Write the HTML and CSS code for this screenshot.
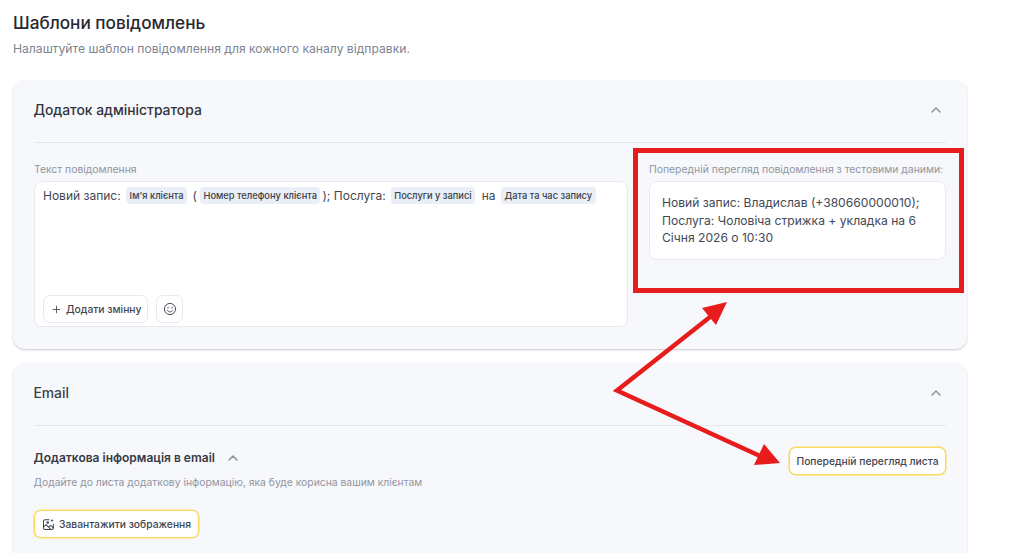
FILE: index.html
```html
<!DOCTYPE html>
<html lang="uk">
<head>
<meta charset="utf-8">
<title>Шаблони повідомлень</title>
<link rel="stylesheet" href="styles.css">
</head>
<body>
<main class="page">
  <h1 class="title">Шаблони повідомлень</h1>
  <p class="subtitle">Налаштуйте шаблон повідомлення для кожного каналу відправки.</p>

  <section class="card first">
    <header class="card-head">
      <h2 class="card-title">Додаток адміністратора</h2>
      <svg class="chev" viewBox="0 0 12 12"><path d="M2 8l4-4 4 4"/></svg>
    </header>
    <div class="cols">
      <div class="col-left">
        <div class="label">Текст повідомлення</div>
        <div class="editor">
          <div class="editor-text">
            <span>Новий запис:</span><span class="tag">Ім'я клієнта</span><span class="paren">(</span><span class="tag tag-tight">Номер телефону клієнта</span><span class="after">); Послуга:</span><span class="tag">Послуги у записі</span><span class="na">на</span><span class="tag">Дата та час запису</span>
          </div>
          <div class="editor-actions">
            <button class="btn btn-add"><svg class="plus" viewBox="0 0 12 12"><path d="M6 1.5v9M1.5 6h9"/></svg>Додати змінну</button>
            <button class="btn btn-icon"><svg class="smile" viewBox="0 0 14 14"><circle cx="7" cy="7" r="5.6"/><path d="M4.4 8.3c.7 1.1 1.5 1.6 2.6 1.6s1.9-.5 2.6-1.6"/><path d="M5 5.2v.9M9 5.2v.9"/></svg></button>
          </div>
        </div>
      </div>
      <div class="col-right">
        <div class="label">Попередній перегляд повідомлення з тестовими даними:</div>
        <div class="preview">Новий запис: Владислав (+380660000010); Послуга: Чоловіча стрижка + укладка на 6 Січня 2026 о 10:30</div>
      </div>
    </div>
  </section>

  <section class="card second">
    <header class="card-head">
      <h2 class="card-title email">Email</h2>
      <svg class="chev" viewBox="0 0 12 12"><path d="M2 8l4-4 4 4"/></svg>
    </header>
    <div class="extra">
      <div class="extra-main">
        <div class="extra-title">Додаткова інформація в email<svg class="chev chev-inline" viewBox="0 0 12 12"><path d="M2 8l4-4 4 4"/></svg></div>
        <p class="extra-desc">Додайте до листа додаткову інформацію, яка буде корисна вашим клієнтам</p>
        <button class="btn btn-yellow"><svg class="img-ico" viewBox="0 0 14 14"><path d="M7.6 1.8H3.2A1.6 1.6 0 0 0 1.6 3.4v7.4a1.6 1.6 0 0 0 1.6 1.6h7.4a1.6 1.6 0 0 0 1.6-1.6V6.6"/><path d="M1.8 9.6l2.6-2.4 5 5"/><path d="M7.6 9.4l1.6-1.4 3 2.6"/><circle cx="6.1" cy="4.9" r=".9"/><path class="spark" d="M10.8.8l.5 1.4 1.4.5-1.4.5-.5 1.4-.5-1.4-1.4-.5 1.4-.5z"/></svg>Завантажити зображення</button>
      </div>
      <button class="btn btn-yellow btn-preview">Попередній перегляд листа</button>
    </div>
  </section>
</main>

<div class="redbox"></div>
<svg class="arrows" viewBox="0 0 1024 553">
  <path class="arrow-line" d="M710 317L617 390.500L760 456"/>
  <path class="arrow-head" d="M727 302L702 308L716 325Z"/>
  <path class="arrow-head" d="M780 463L754 465L764 444Z"/>
</svg>
</body>
</html>
```
FILE: styles.css
```css
* { box-sizing: border-box; }
html, body { margin: 0; height: 553px; overflow: hidden; background: #fff; }
body { font-family: Inter, "Liberation Sans", sans-serif; color: #374151; position: relative; }

.page { padding: 13px 57px 0 13px; height: 553px; overflow: hidden; }
.title { margin: 0; font-size: 17.2px; line-height: 20px; font-weight: 500; color: #27272f; }
.subtitle { margin: 7px 0 0; font-size: 12.15px; line-height: 18px; color: #7d8592; }

.card { background: #f7f8fc; border-radius: 12px; padding: 0 21px; box-shadow: 0 1px 2px rgba(60,66,87,.28); }
.first { margin-top: 22px; height: 269px; }
.second { margin-top: 14px; height: 190px; border-radius: 12px 12px 0 0; }
.card-head { height: 63px; display: flex; align-items: center; justify-content: space-between; border-bottom: 1px solid #e4e6ed; padding: 0 4px 2px 0; }
.card-title { margin: 0 0 0 -.6px; font-size: 13.85px; line-height: 20px; font-weight: 500; color: #30343c; }
.card-title.email { color: #3a3f48; }
.chev { width: 12px; height: 12px; fill: none; stroke: #8a8f98; stroke-width: 1.4; stroke-linecap: round; stroke-linejoin: round; }

.cols { display: flex; gap: 21px; margin-top: 20px; }
.col-left { width: 594px; }
.col-right { flex: 1; min-width: 0; }
.label { font-size: 10.4px; line-height: 14px; color: #8f95a1; white-space: nowrap; margin-bottom: 4px; }

.editor { height: 146px; background: #fff; border: 1px solid #e8eaf0; border-radius: 8px; padding: 5px 8px 3px; display: flex; flex-direction: column; justify-content: space-between; }
.editor-text { display: flex; align-items: center; font-size: 12px; line-height: 17px; color: #3f4651; white-space: nowrap; }
.tag { background: #eaeef6; border-radius: 4px; font-size: 9.3px; font-weight: 500; line-height: 17px; color: #3a414c; padding: 0 3.5px; margin-left: 5.5px; }
.tag-tight { margin-left: 3px; }
.paren { margin-left: 5.5px; }
.after { margin-left: 2px; }
.after + .tag { margin-left: 5px; }
.na { margin-left: 6.5px; }
.na + .tag { margin-left: 5.5px; }

.editor-actions { display: flex; gap: 8px; }
.btn { display: inline-flex; align-items: center; height: 28px; background: #fff; border: 1px solid #e8eaf0; border-radius: 7px; padding: 0 7px; font-family: inherit; font-size: 10.3px; font-weight: 500; color: #3f4651; white-space: nowrap; }
.btn-add { padding: 0 6px 0 8px; }
.plus { width: 9px; height: 9px; margin-right: 5px; fill: none; stroke: #4a505b; stroke-width: 1.2; stroke-linecap: round; }
.btn-icon { width: 27px; padding: 0; justify-content: center; }
.smile { width: 14px; height: 14px; fill: none; stroke: #4a505b; stroke-width: 1; stroke-linecap: round; }

.preview { background: #fff; border: 1px solid #e8eaf0; border-radius: 8px; height: 79px; padding: 12px; font-size: 12.1px; line-height: 17.5px; color: #424955; }

.extra { display: flex; justify-content: space-between; align-items: flex-start; margin-top: 21px; }
.extra-title { display: flex; align-items: center; font-size: 12px; line-height: 20px; font-weight: 600; color: #363b44; margin: 1px 0 0 -.5px; }
.chev-inline { margin-left: 12px; stroke-width: 1.5; }
.extra-desc { margin: 7px 0 0 -.5px; font-size: 10.35px; line-height: 14px; color: #8f95a1; }
.btn-yellow { border: 1px solid #fdd861; border-radius: 7px; box-shadow: 0 0 0 .6px #fdd861; }
.extra-main .btn-yellow { margin-top: 21px; padding: 0 7px; }
.btn-preview { padding: 0 6.500px; }
.img-ico { width: 13px; height: 13px; margin-right: 4px; fill: none; stroke: #3f4651; stroke-width: 1.1; stroke-linecap: round; stroke-linejoin: round; }
.img-ico .spark { fill: #3f4651; stroke: none; }

.redbox { position: absolute; left: 633px; top: 148px; width: 331px; height: 145px; border: 5px solid #e71d1d; }
.arrows { position: absolute; left: 0; top: 0; width: 1024px; height: 553px; pointer-events: none; }
.arrow-line { fill: none; stroke: #e71d1d; stroke-width: 4.5; stroke-linejoin: miter; stroke-miterlimit: 10; }
.arrow-head { fill: #e71d1d; }
```
